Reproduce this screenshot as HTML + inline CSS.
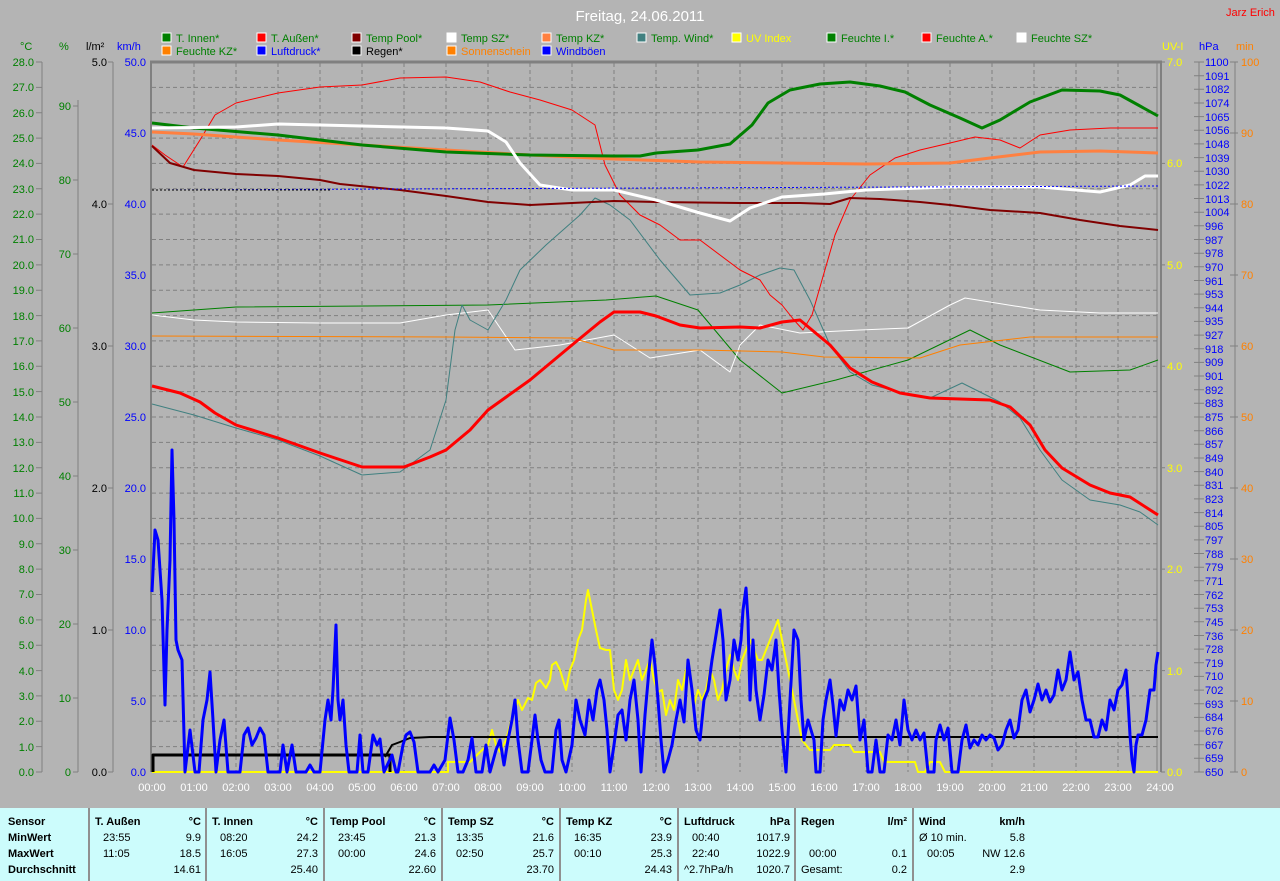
<!DOCTYPE html>
<html><head><meta charset="utf-8"><style>
html,body{margin:0;padding:0;background:#b4b4b4;width:1280px;height:881px;overflow:hidden}
svg{display:block}
text{font-family:"Liberation Sans",sans-serif;font-size:11px}
.tb{position:absolute;left:0;top:808px;width:1280px;height:73px;background:#ccfcfc;font-family:"Liberation Sans",sans-serif;font-size:11px;color:#000}
.c{position:absolute;top:0;height:73px;border-left:2px solid #909090}
.col{position:absolute;top:0;width:106px;height:73px}
.col div{position:absolute;white-space:nowrap}
.l{left:0}.l2{left:8px}.r{right:0}
.b{font-weight:bold}
.y0{top:8px}.y1{top:24px}.y2{top:40px}.y3{top:56px}
</style></head><body>
<svg width="1280" height="881" xmlns="http://www.w3.org/2000/svg" style="position:absolute;left:0;top:0">
<text x="640" y="21" fill="#fff" text-anchor="middle" style="font-size:15px">Freitag, 24.06.2011</text>
<text x="1226" y="16" fill="#f00">Jarz Erich</text>
<g stroke="#fff" stroke-width="1">
<rect x="162" y="33" width="9" height="9" fill="#008000"/><rect x="257" y="33" width="9" height="9" fill="#f00"/><rect x="352" y="33" width="9" height="9" fill="#800000"/><rect x="447" y="33" width="9" height="9" fill="#fff"/><rect x="542" y="33" width="9" height="9" fill="#ff8040"/><rect x="637" y="33" width="9" height="9" fill="#408080"/><rect x="732" y="33" width="9" height="9" fill="#ff0"/><rect x="827" y="33" width="9" height="9" fill="#008000"/><rect x="922" y="33" width="9" height="9" fill="#f00"/><rect x="1017" y="33" width="9" height="9" fill="#fff"/>
<rect x="162" y="46" width="9" height="9" fill="#ff8000"/><rect x="257" y="46" width="9" height="9" fill="#00f"/><rect x="352" y="46" width="9" height="9" fill="#000"/><rect x="447" y="46" width="9" height="9" fill="#ff8000"/><rect x="542" y="46" width="9" height="9" fill="#00f"/>
</g>
<g fill="#008000">
<text x="176" y="42">T. Innen*</text><text x="271" y="42">T. Außen*</text><text x="366" y="42">Temp Pool*</text><text x="461" y="42">Temp SZ*</text><text x="556" y="42">Temp KZ*</text><text x="651" y="42">Temp. Wind*</text><text x="746" y="42" fill="#ff0">UV Index</text><text x="841" y="42">Feuchte I.*</text><text x="936" y="42">Feuchte A.*</text><text x="1031" y="42">Feuchte SZ*</text>
<text x="176" y="55">Feuchte KZ*</text><text x="271" y="55" fill="#00f">Luftdruck*</text><text x="366" y="55" fill="#000">Regen*</text><text x="461" y="55" fill="#ff8000">Sonnenschein</text><text x="556" y="55" fill="#00f">Windböen</text>
</g>
<text x="20" y="50" fill="#008000">°C</text><text x="59" y="50" fill="#008000">%</text><text x="86" y="50" fill="#000">l/m²</text><text x="117" y="50" fill="#00f">km/h</text>
<text x="1162" y="50" fill="#ff0">UV-I</text><text x="1199" y="50" fill="#00f">hPa</text><text x="1236" y="50" fill="#ff8000">min</text>
<!-- grid -->
<path stroke="#808080" stroke-dasharray="4,3" fill="none" d="M194,63V772M236,63V772M278,63V772M320,63V772M362,63V772M404,63V772M446,63V772M488,63V772M530,63V772M572,63V772M614,63V772M656,63V772M698,63V772M740,63V772M782,63V772M824,63V772M866,63V772M908,63V772M950,63V772M992,63V772M1034,63V772M1076,63V772M1118,63V772
M152,87.4H1157M152,112.7H1157M152,138.1H1157M152,163.4H1157M152,188.8H1157M152,214.1H1157M152,239.5H1157M152,264.9H1157M152,290.2H1157M152,315.6H1157M152,340.9H1157M152,366.3H1157M152,391.6H1157M152,417H1157M152,442.4H1157M152,467.7H1157M152,493.1H1157M152,518.4H1157M152,543.8H1157M152,569.1H1157M152,594.5H1157M152,619.9H1157M152,645.2H1157M152,670.6H1157M152,695.9H1157M152,721.3H1157M152,746.6H1157"/>
<g stroke="#808080" fill="none">
<line x1="150" y1="62" x2="1162" y2="62" stroke-width="3"/>
<line x1="151" y1="62" x2="151" y2="772" stroke-width="2"/>
<line x1="1157" y1="62" x2="1157" y2="772"/>
<line x1="1161" y1="62" x2="1161" y2="772" stroke-width="2"/>
<line x1="42" y1="62" x2="42" y2="772"/><line x1="78" y1="100" x2="78" y2="772"/><line x1="113" y1="62" x2="113" y2="772"/>
<line x1="1199" y1="62" x2="1199" y2="772"/><line x1="1235" y1="62" x2="1235" y2="772"/>
<path d="M36,62H42M36,87.4H42M36,112.7H42M36,138.1H42M36,163.4H42M36,188.8H42M36,214.1H42M36,239.5H42M36,264.9H42M36,290.2H42M36,315.6H42M36,340.9H42M36,366.3H42M36,391.6H42M36,417H42M36,442.4H42M36,467.7H42M36,493.1H42M36,518.4H42M36,543.8H42M36,569.1H42M36,594.5H42M36,619.9H42M36,645.2H42M36,670.6H42M36,695.9H42M36,721.3H42M36,746.6H42M36,772H42
M73,106H78M73,180H78M73,254H78M73,328H78M73,402H78M73,476H78M73,550H78M73,624H78M73,698H78M73,772H78
M108,62H113M108,204H113M108,346H113M108,488H113M108,630H113M108,772H113
M1161,62H1165M1161,163.4H1165M1161,264.9H1165M1161,366.3H1165M1161,467.7H1165M1161,569.1H1165M1161,670.6H1165M1161,772H1165
M1230,62H1238M1230,133H1238M1230,204H1238M1230,275H1238M1230,346H1238M1230,417H1238M1230,488H1238M1230,559H1238M1230,630H1238M1230,701H1238M1230,772H1238
M1194,62H1204M1194,75.7H1204M1194,89.3H1204M1194,103H1204M1194,116.6H1204M1194,130.3H1204M1194,143.9H1204M1194,157.6H1204M1194,171.2H1204M1194,184.9H1204M1194,198.5H1204M1194,212.2H1204M1194,225.8H1204M1194,239.5H1204M1194,253.2H1204M1194,266.8H1204M1194,280.5H1204M1194,294.1H1204M1194,307.8H1204M1194,321.4H1204M1194,335.1H1204M1194,348.7H1204M1194,362.4H1204M1194,376H1204M1194,389.7H1204M1194,403.3H1204M1194,417H1204M1194,430.7H1204M1194,444.3H1204M1194,458H1204M1194,471.6H1204M1194,485.3H1204M1194,498.9H1204M1194,512.6H1204M1194,526.2H1204M1194,539.9H1204M1194,553.5H1204M1194,567.2H1204M1194,580.8H1204M1194,594.5H1204M1194,608.2H1204M1194,621.8H1204M1194,635.5H1204M1194,649.1H1204M1194,662.8H1204M1194,676.4H1204M1194,690.1H1204M1194,703.7H1204M1194,717.4H1204M1194,731H1204M1194,744.7H1204M1194,758.3H1204M1194,772H1204"/>
</g>
<!-- left labels -->
<g fill="#008000" text-anchor="end">
<text x="34" y="66">28.0</text><text x="34" y="91">27.0</text><text x="34" y="117">26.0</text><text x="34" y="142">25.0</text><text x="34" y="167">24.0</text><text x="34" y="193">23.0</text><text x="34" y="218">22.0</text><text x="34" y="243">21.0</text><text x="34" y="269">20.0</text><text x="34" y="294">19.0</text><text x="34" y="320">18.0</text><text x="34" y="345">17.0</text><text x="34" y="370">16.0</text><text x="34" y="396">15.0</text><text x="34" y="421">14.0</text><text x="34" y="446">13.0</text><text x="34" y="472">12.0</text><text x="34" y="497">11.0</text><text x="34" y="522">10.0</text><text x="34" y="548">9.0</text><text x="34" y="573">8.0</text><text x="34" y="598">7.0</text><text x="34" y="624">6.0</text><text x="34" y="649">5.0</text><text x="34" y="675">4.0</text><text x="34" y="700">3.0</text><text x="34" y="725">2.0</text><text x="34" y="751">1.0</text><text x="34" y="776">0.0</text>
<text x="71" y="110">90</text><text x="71" y="184">80</text><text x="71" y="258">70</text><text x="71" y="332">60</text><text x="71" y="406">50</text><text x="71" y="480">40</text><text x="71" y="554">30</text><text x="71" y="628">20</text><text x="71" y="702">10</text><text x="71" y="776">0</text>
</g>
<g fill="#000" text-anchor="end">
<text x="107" y="66">5.0</text><text x="107" y="208">4.0</text><text x="107" y="350">3.0</text><text x="107" y="492">2.0</text><text x="107" y="634">1.0</text><text x="107" y="776">0.0</text>
</g>
<g fill="#00f" text-anchor="end">
<text x="146" y="66">50.0</text><text x="146" y="137">45.0</text><text x="146" y="208">40.0</text><text x="146" y="279">35.0</text><text x="146" y="350">30.0</text><text x="146" y="421">25.0</text><text x="146" y="492">20.0</text><text x="146" y="563">15.0</text><text x="146" y="634">10.0</text><text x="146" y="705">5.0</text><text x="146" y="776">0.0</text>
</g>
<g fill="#ff0">
<text x="1167" y="66">7.0</text><text x="1167" y="167">6.0</text><text x="1167" y="269">5.0</text><text x="1167" y="370">4.0</text><text x="1167" y="472">3.0</text><text x="1167" y="573">2.0</text><text x="1167" y="675">1.0</text><text x="1167" y="776">0.0</text>
</g>
<g fill="#ff8000">
<text x="1241" y="66">100</text><text x="1241" y="137">90</text><text x="1241" y="208">80</text><text x="1241" y="279">70</text><text x="1241" y="350">60</text><text x="1241" y="421">50</text><text x="1241" y="492">40</text><text x="1241" y="563">30</text><text x="1241" y="634">20</text><text x="1241" y="705">10</text><text x="1241" y="776">0</text>
</g>
<g fill="#00f">
<text x="1205" y="66">1100</text><text x="1205" y="80">1091</text><text x="1205" y="93">1082</text><text x="1205" y="107">1074</text><text x="1205" y="121">1065</text><text x="1205" y="134">1056</text><text x="1205" y="148">1048</text><text x="1205" y="162">1039</text><text x="1205" y="175">1030</text><text x="1205" y="189">1022</text><text x="1205" y="203">1013</text><text x="1205" y="216">1004</text><text x="1205" y="230">996</text><text x="1205" y="244">987</text><text x="1205" y="257">978</text><text x="1205" y="271">970</text><text x="1205" y="285">961</text><text x="1205" y="298">953</text><text x="1205" y="312">944</text><text x="1205" y="325">935</text><text x="1205" y="339">927</text><text x="1205" y="353">918</text><text x="1205" y="366">909</text><text x="1205" y="380">901</text><text x="1205" y="394">892</text><text x="1205" y="407">883</text><text x="1205" y="421">875</text><text x="1205" y="435">866</text><text x="1205" y="448">857</text><text x="1205" y="462">849</text><text x="1205" y="476">840</text><text x="1205" y="489">831</text><text x="1205" y="503">823</text><text x="1205" y="517">814</text><text x="1205" y="530">805</text><text x="1205" y="544">797</text><text x="1205" y="558">788</text><text x="1205" y="571">779</text><text x="1205" y="585">771</text><text x="1205" y="599">762</text><text x="1205" y="612">753</text><text x="1205" y="626">745</text><text x="1205" y="640">736</text><text x="1205" y="653">728</text><text x="1205" y="667">719</text><text x="1205" y="680">710</text><text x="1205" y="694">702</text><text x="1205" y="708">693</text><text x="1205" y="721">684</text><text x="1205" y="735">676</text><text x="1205" y="749">667</text><text x="1205" y="762">659</text><text x="1205" y="776">650</text>
</g>
<g fill="#fff" text-anchor="middle">
<text x="152" y="791">00:00</text><text x="194" y="791">01:00</text><text x="236" y="791">02:00</text><text x="278" y="791">03:00</text><text x="320" y="791">04:00</text><text x="362" y="791">05:00</text><text x="404" y="791">06:00</text><text x="446" y="791">07:00</text><text x="488" y="791">08:00</text><text x="530" y="791">09:00</text><text x="572" y="791">10:00</text><text x="614" y="791">11:00</text><text x="656" y="791">12:00</text><text x="698" y="791">13:00</text><text x="740" y="791">14:00</text><text x="782" y="791">15:00</text><text x="824" y="791">16:00</text><text x="866" y="791">17:00</text><text x="908" y="791">18:00</text><text x="950" y="791">19:00</text><text x="992" y="791">20:00</text><text x="1034" y="791">21:00</text><text x="1076" y="791">22:00</text><text x="1118" y="791">23:00</text><text x="1160" y="791">24:00</text>
</g>
<!-- curves -->
<g fill="none" stroke-linejoin="round">
<polyline stroke="#008000" stroke-width="1" points="152,313 236,307 488,305 606,300 656,296 698,310 740,360 782,393 836,380 908,360 970,330 1000,345 1070,372 1130,370 1158,360"/>
<polyline stroke="#fff" stroke-width="1" points="152,315 194,320 236,322 320,323 400,323 446,315 488,310 515,350 560,345 614,335 650,358 700,350 730,372 740,345 760,325 800,333 860,330 908,328 950,305 965,298 1040,310 1100,313 1158,313"/>
<polyline stroke="#ff8000" stroke-width="1" points="152,336 446,337 572,338 614,350 700,350 782,352 824,357 920,358 960,345 1030,337 1158,337"/>
<polyline stroke="#408080" stroke-width="1" points="152,404 194,415 236,428 278,440 320,456 362,475 400,472 430,450 446,400 455,330 462,305 470,320 488,330 506,300 520,270 546,245 580,215 595,198 610,205 630,220 660,260 690,295 720,293 740,285 760,275 780,268 794,270 810,300 830,345 850,372 872,385 900,392 930,398 962,383 980,392 1000,402 1020,418 1040,450 1062,480 1090,500 1120,505 1140,512 1158,525"/>
<polyline stroke="#f00" stroke-width="1" points="152,145 165,155 183,167 200,140 215,115 236,103 278,93 320,87 362,85 400,78 446,77 480,82 510,92 540,100 572,110 595,125 605,165 620,195 640,215 660,225 680,240 700,240 720,255 740,270 760,280 770,295 782,305 794,320 803,330 812,315 822,280 835,235 850,200 870,175 895,158 920,150 950,143 975,137 1000,140 1020,148 1040,135 1070,130 1110,128 1158,128"/>
<polyline stroke="#800000" stroke-width="2" points="152,146 170,163 194,170 236,174 278,176 320,180 340,184 400,190 446,196 488,202 530,205 572,203 614,201 656,202 740,203 800,203 830,204 850,198 880,199 920,202 950,205 990,210 1040,213 1080,220 1120,226 1158,230"/>
<polyline stroke="#ff8040" stroke-width="3" points="152,132 194,134 278,140 362,145 446,150 530,155 614,159 700,162 782,163 866,164 950,163 990,158 1040,152 1100,151 1158,153"/>
<polyline stroke="#008000" stroke-width="3" points="152,123 194,128 278,135 362,145 446,152 530,155 614,156 640,156 656,153 698,150 730,144 752,125 768,103 790,90 820,84 850,82 880,86 905,92 930,105 960,118 982,128 1000,120 1030,102 1062,90 1100,91 1120,95 1140,106 1158,116"/>
<polyline stroke="#fff" stroke-width="3" points="152,128 236,127 278,124 362,126 446,128 488,131 506,142 520,163 540,185 572,190 614,190 656,200 700,213 730,221 750,208 782,197 824,194 866,190 950,187 1040,187 1100,192 1130,185 1145,176 1158,176"/>
<polyline stroke="#00f" stroke-width="1" stroke-dasharray="2,2" points="152,190 1158,186"/>
<polyline stroke="#000" stroke-width="1" stroke-dasharray="2,2" points="152,190 330,190"/>
<polyline stroke="#f00" stroke-width="3" points="152,386 180,393 200,402 215,413 236,425 278,438 320,453 362,467 404,467 430,457 446,450 470,430 488,410 530,380 572,345 600,322 614,312 640,312 656,316 680,325 700,328 740,327 760,328 782,322 800,320 830,345 850,368 872,382 900,393 930,398 960,399 990,400 1010,407 1030,425 1045,450 1062,468 1090,485 1110,493 1130,497 1158,515"/>
<polyline stroke="#ff0" stroke-width="2" points="152,772 448,772 448,762 470,762 480,752 488,745 492,730 496,745 500,752 506,740 510,725 514,712 518,700 522,710 528,698 532,700 536,683 540,680 546,688 550,680 552,665 556,662 560,670 566,690 570,670 574,660 578,640 582,630 586,600 588,590 592,610 596,630 600,648 606,650 610,650 614,690 618,700 622,690 626,660 630,680 634,670 638,660 642,680 646,670 650,660 654,680 658,692 662,690 666,715 670,700 674,710 678,680 682,690 686,670 690,680 694,705 698,690 702,700 706,690 710,670 714,680 718,700 722,690 726,670 730,655 734,670 738,680 742,660 746,650 750,640 754,650 758,660 762,660 766,650 770,640 774,630 778,620 782,640 786,660 790,680 794,700 798,720 802,740 806,745 810,750 830,750 834,745 850,745 854,752 880,752 884,762 915,762 918,772 925,772 930,762 940,762 945,772 1158,772"/>
<polyline stroke="#000" stroke-width="3" points="153,772 153,755 390,755 390,772"/>
<polyline stroke="#000" stroke-width="2" points="385,757 392,745 400,742 410,738 430,737 500,737 1158,737"/>
<polyline stroke="#00f" stroke-width="3" points="152,592 155,530 158,540 162,600 165,705 167,630 170,560 172,450 174,520 176,640 178,650 182,660 185,772 190,730 195,772 199,772 203,720 207,700 210,672 213,720 216,772 220,740 224,720 228,772 240,772 244,735 248,728 252,745 256,738 260,728 264,735 268,772 280,772 283,745 287,772 292,745 296,772 306,772 310,765 314,772 320,772 325,720 328,700 331,720 333,690 336,625 338,700 340,720 343,700 346,745 349,772 357,772 360,735 363,772 368,772 373,735 377,745 380,739 384,772 392,755 396,772 398,772 403,745 406,735 410,732 414,742 418,772 430,772 434,765 438,772 445,760 450,718 454,740 458,772 463,772 468,760 472,738 476,772 482,772 486,745 490,772 496,750 500,740 504,765 508,740 512,720 515,700 518,740 522,772 528,772 532,740 535,715 538,740 541,760 545,772 552,772 556,730 559,720 562,760 566,772 572,745 576,700 580,720 585,735 589,700 593,720 597,690 600,680 604,700 607,730 610,772 614,745 618,715 622,710 626,740 630,700 634,680 638,720 641,772 645,715 649,670 652,640 655,665 658,700 661,740 664,772 668,760 672,745 676,720 680,700 684,722 688,660 692,690 696,730 700,740 704,700 708,690 712,660 716,635 720,610 723,640 726,700 730,680 734,640 738,660 741,640 743,610 746,588 748,620 750,700 753,640 756,690 760,720 764,695 768,660 772,670 776,640 779,690 782,730 786,772 790,700 794,630 798,640 801,700 804,740 808,720 811,730 814,740 816,772 820,772 823,720 826,700 830,680 833,705 836,736 840,700 844,710 848,690 852,700 856,686 860,740 864,720 868,772 872,772 876,740 880,772 884,772 888,735 892,740 896,720 900,745 904,700 908,730 912,740 916,730 920,740 924,733 928,772 934,772 936,740 940,725 944,740 948,728 952,772 958,772 962,740 966,725 970,748 974,740 978,745 982,735 986,740 990,735 994,738 998,750 1002,745 1006,730 1010,720 1014,738 1018,730 1022,700 1026,690 1030,712 1034,700 1038,684 1042,700 1046,690 1050,702 1054,695 1058,670 1062,690 1066,680 1070,652 1074,680 1078,672 1082,700 1086,720 1090,720 1094,737 1098,737 1102,720 1106,730 1110,700 1114,710 1118,690 1122,685 1126,670 1128,700 1130,735 1132,760 1134,772 1136,745 1138,735 1142,735 1146,720 1150,690 1154,690 1156,665 1158,652"/>
</g>
</svg>
<div class="tb">
<div style="position:absolute;left:8px;top:8px" class="b">Sensor</div><div style="position:absolute;left:8px;top:24px" class="b">MinWert</div><div style="position:absolute;left:8px;top:40px" class="b">MaxWert</div><div style="position:absolute;left:8px;top:56px" class="b">Durchschnitt</div>
<div class="c" style="left:88px"></div><div class="c" style="left:205px"></div><div class="c" style="left:323px"></div><div class="c" style="left:441px"></div><div class="c" style="left:559px"></div><div class="c" style="left:677px"></div><div class="c" style="left:794px"></div><div class="c" style="left:912px"></div>
<div class="col" style="left:95px"><div class="l b y0">T. Außen</div><div class="r b y0">°C</div><div class="l2 y1">23:55</div><div class="r y1">9.9</div><div class="l2 y2">11:05</div><div class="r y2">18.5</div><div class="r y3">14.61</div></div>
<div class="col" style="left:212px"><div class="l b y0">T. Innen</div><div class="r b y0">°C</div><div class="l2 y1">08:20</div><div class="r y1">24.2</div><div class="l2 y2">16:05</div><div class="r y2">27.3</div><div class="r y3">25.40</div></div>
<div class="col" style="left:330px"><div class="l b y0">Temp Pool</div><div class="r b y0">°C</div><div class="l2 y1">23:45</div><div class="r y1">21.3</div><div class="l2 y2">00:00</div><div class="r y2">24.6</div><div class="r y3">22.60</div></div>
<div class="col" style="left:448px"><div class="l b y0">Temp SZ</div><div class="r b y0">°C</div><div class="l2 y1">13:35</div><div class="r y1">21.6</div><div class="l2 y2">02:50</div><div class="r y2">25.7</div><div class="r y3">23.70</div></div>
<div class="col" style="left:566px"><div class="l b y0">Temp KZ</div><div class="r b y0">°C</div><div class="l2 y1">16:35</div><div class="r y1">23.9</div><div class="l2 y2">00:10</div><div class="r y2">25.3</div><div class="r y3">24.43</div></div>
<div class="col" style="left:684px"><div class="l b y0">Luftdruck</div><div class="r b y0">hPa</div><div class="l2 y1">00:40</div><div class="r y1">1017.9</div><div class="l2 y2">22:40</div><div class="r y2">1022.9</div><div class="l y3">^2.7hPa/h</div><div class="r y3">1020.7</div></div>
<div class="col" style="left:801px"><div class="l b y0">Regen</div><div class="r b y0">l/m²</div><div class="l2 y2">00:00</div><div class="r y2">0.1</div><div class="l y3">Gesamt:</div><div class="r y3">0.2</div></div>
<div class="col" style="left:919px"><div class="l b y0">Wind</div><div class="r b y0">km/h</div><div class="l y1">Ø 10 min.</div><div class="r y1">5.8</div><div class="l2 y2">00:05</div><div class="r y2">NW 12.6</div><div class="r y3">2.9</div></div>
</div>
</body></html>
